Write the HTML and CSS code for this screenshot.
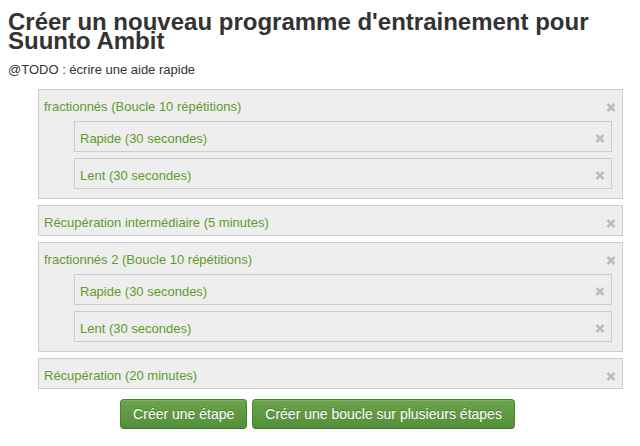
FILE: index.html
```html
<!DOCTYPE html>
<html lang="fr">
<head>
<meta charset="utf-8">
<title>Créer un nouveau programme</title>
<link rel="stylesheet" href="styles.css">
</head>
<body>
<h1 class="title">Créer un nouveau programme d'entrainement pour Suunto Ambit</h1>
<p class="help">@TODO : écrire une aide rapide</p>
<div class="steps">
  <div class="step">
    <div class="step-head"><span class="label">fractionnés (Boucle 10 répétitions)</span><span class="close"><svg width="10" height="9" viewBox="0 0 10 9"><path d="M1.5 1 L8.5 8 M8.5 1 L1.5 8" stroke="#bcbcbc" stroke-width="2.6" stroke-linecap="butt"/></svg></span></div>
    <div class="children">
      <div class="step"><div class="step-head"><span class="label">Rapide (30 secondes)</span><span class="close"><svg width="10" height="9" viewBox="0 0 10 9"><path d="M1.5 1 L8.5 8 M8.5 1 L1.5 8" stroke="#bcbcbc" stroke-width="2.6"/></svg></span></div></div>
      <div class="step"><div class="step-head"><span class="label">Lent (30 secondes)</span><span class="close"><svg width="10" height="9" viewBox="0 0 10 9"><path d="M1.5 1 L8.5 8 M8.5 1 L1.5 8" stroke="#bcbcbc" stroke-width="2.6"/></svg></span></div></div>
    </div>
  </div>
  <div class="step"><div class="step-head"><span class="label">Récupération intermédiaire (5 minutes)</span><span class="close"><svg width="10" height="9" viewBox="0 0 10 9"><path d="M1.5 1 L8.5 8 M8.5 1 L1.5 8" stroke="#bcbcbc" stroke-width="2.6"/></svg></span></div></div>
  <div class="step">
    <div class="step-head"><span class="label">fractionnés 2 (Boucle 10 répétitions)</span><span class="close"><svg width="10" height="9" viewBox="0 0 10 9"><path d="M1.5 1 L8.5 8 M8.5 1 L1.5 8" stroke="#bcbcbc" stroke-width="2.6"/></svg></span></div>
    <div class="children">
      <div class="step"><div class="step-head"><span class="label">Rapide (30 secondes)</span><span class="close"><svg width="10" height="9" viewBox="0 0 10 9"><path d="M1.5 1 L8.5 8 M8.5 1 L1.5 8" stroke="#bcbcbc" stroke-width="2.6"/></svg></span></div></div>
      <div class="step"><div class="step-head"><span class="label">Lent (30 secondes)</span><span class="close"><svg width="10" height="9" viewBox="0 0 10 9"><path d="M1.5 1 L8.5 8 M8.5 1 L1.5 8" stroke="#bcbcbc" stroke-width="2.6"/></svg></span></div></div>
    </div>
  </div>
  <div class="step"><div class="step-head"><span class="label">Récupération (20 minutes)</span><span class="close"><svg width="10" height="9" viewBox="0 0 10 9"><path d="M1.5 1 L8.5 8 M8.5 1 L1.5 8" stroke="#bcbcbc" stroke-width="2.6"/></svg></span></div></div>
</div>
<div class="actions">
  <button class="btn">Créer une étape</button>
  <button class="btn">Créer une boucle sur plusieurs étapes</button>
</div>
</body>
</html>
```
FILE: styles.css
```css
body {
  margin: 8px;
  font-family: "Liberation Sans", Arial, Helvetica, sans-serif;
  color: #333;
  background: #fff;
}
.title {
  margin: 4px 0 0;
  font-size: 24px;
  line-height: 19px;
  font-weight: bold;
  color: #333;
}
.help {
  margin: 11px 0 0;
  font-size: 13px;
  line-height: 17px;
}
.steps {
  margin: 11px 9px 0 30px;
}
.step {
  background: #eeeeee;
  border: 1px solid #cccccc;
  padding: 8px 6px 4px 5px;
  margin-top: 6px;
}
.steps > .step:first-child {
  margin-top: 0;
}
.step:has(.children) {
  padding-bottom: 9px;
}
.step-head {
  display: flex;
  justify-content: space-between;
  align-items: flex-start;
  font-size: 13px;
  line-height: 17px;
  color: #5e9b2c;
}
.close {
  display: flex;
  margin-top: 5px;
}
.children {
  margin: 0 4px 0 30px;
}
.children .close {
  margin-top: 4px;
}
.actions {
  display: flex;
  justify-content: center;
  gap: 5px;
  margin-top: 10px;
  padding-right: 5px;
}
.btn {
  font-family: "Liberation Sans", Arial, Helvetica, sans-serif;
  font-size: 14px;
  line-height: 20px;
  padding: 4px 12px;
  color: #fff;
  text-shadow: 0 -1px 0 rgba(0,0,0,0.25);
  background: linear-gradient(#6aa54b, #548f3a);
  border: 1px solid #4a8233;
  border-bottom-color: #3d6f2a;
  border-radius: 4px;
  box-shadow: inset 0 1px 0 rgba(255,255,255,0.15);
}
```
